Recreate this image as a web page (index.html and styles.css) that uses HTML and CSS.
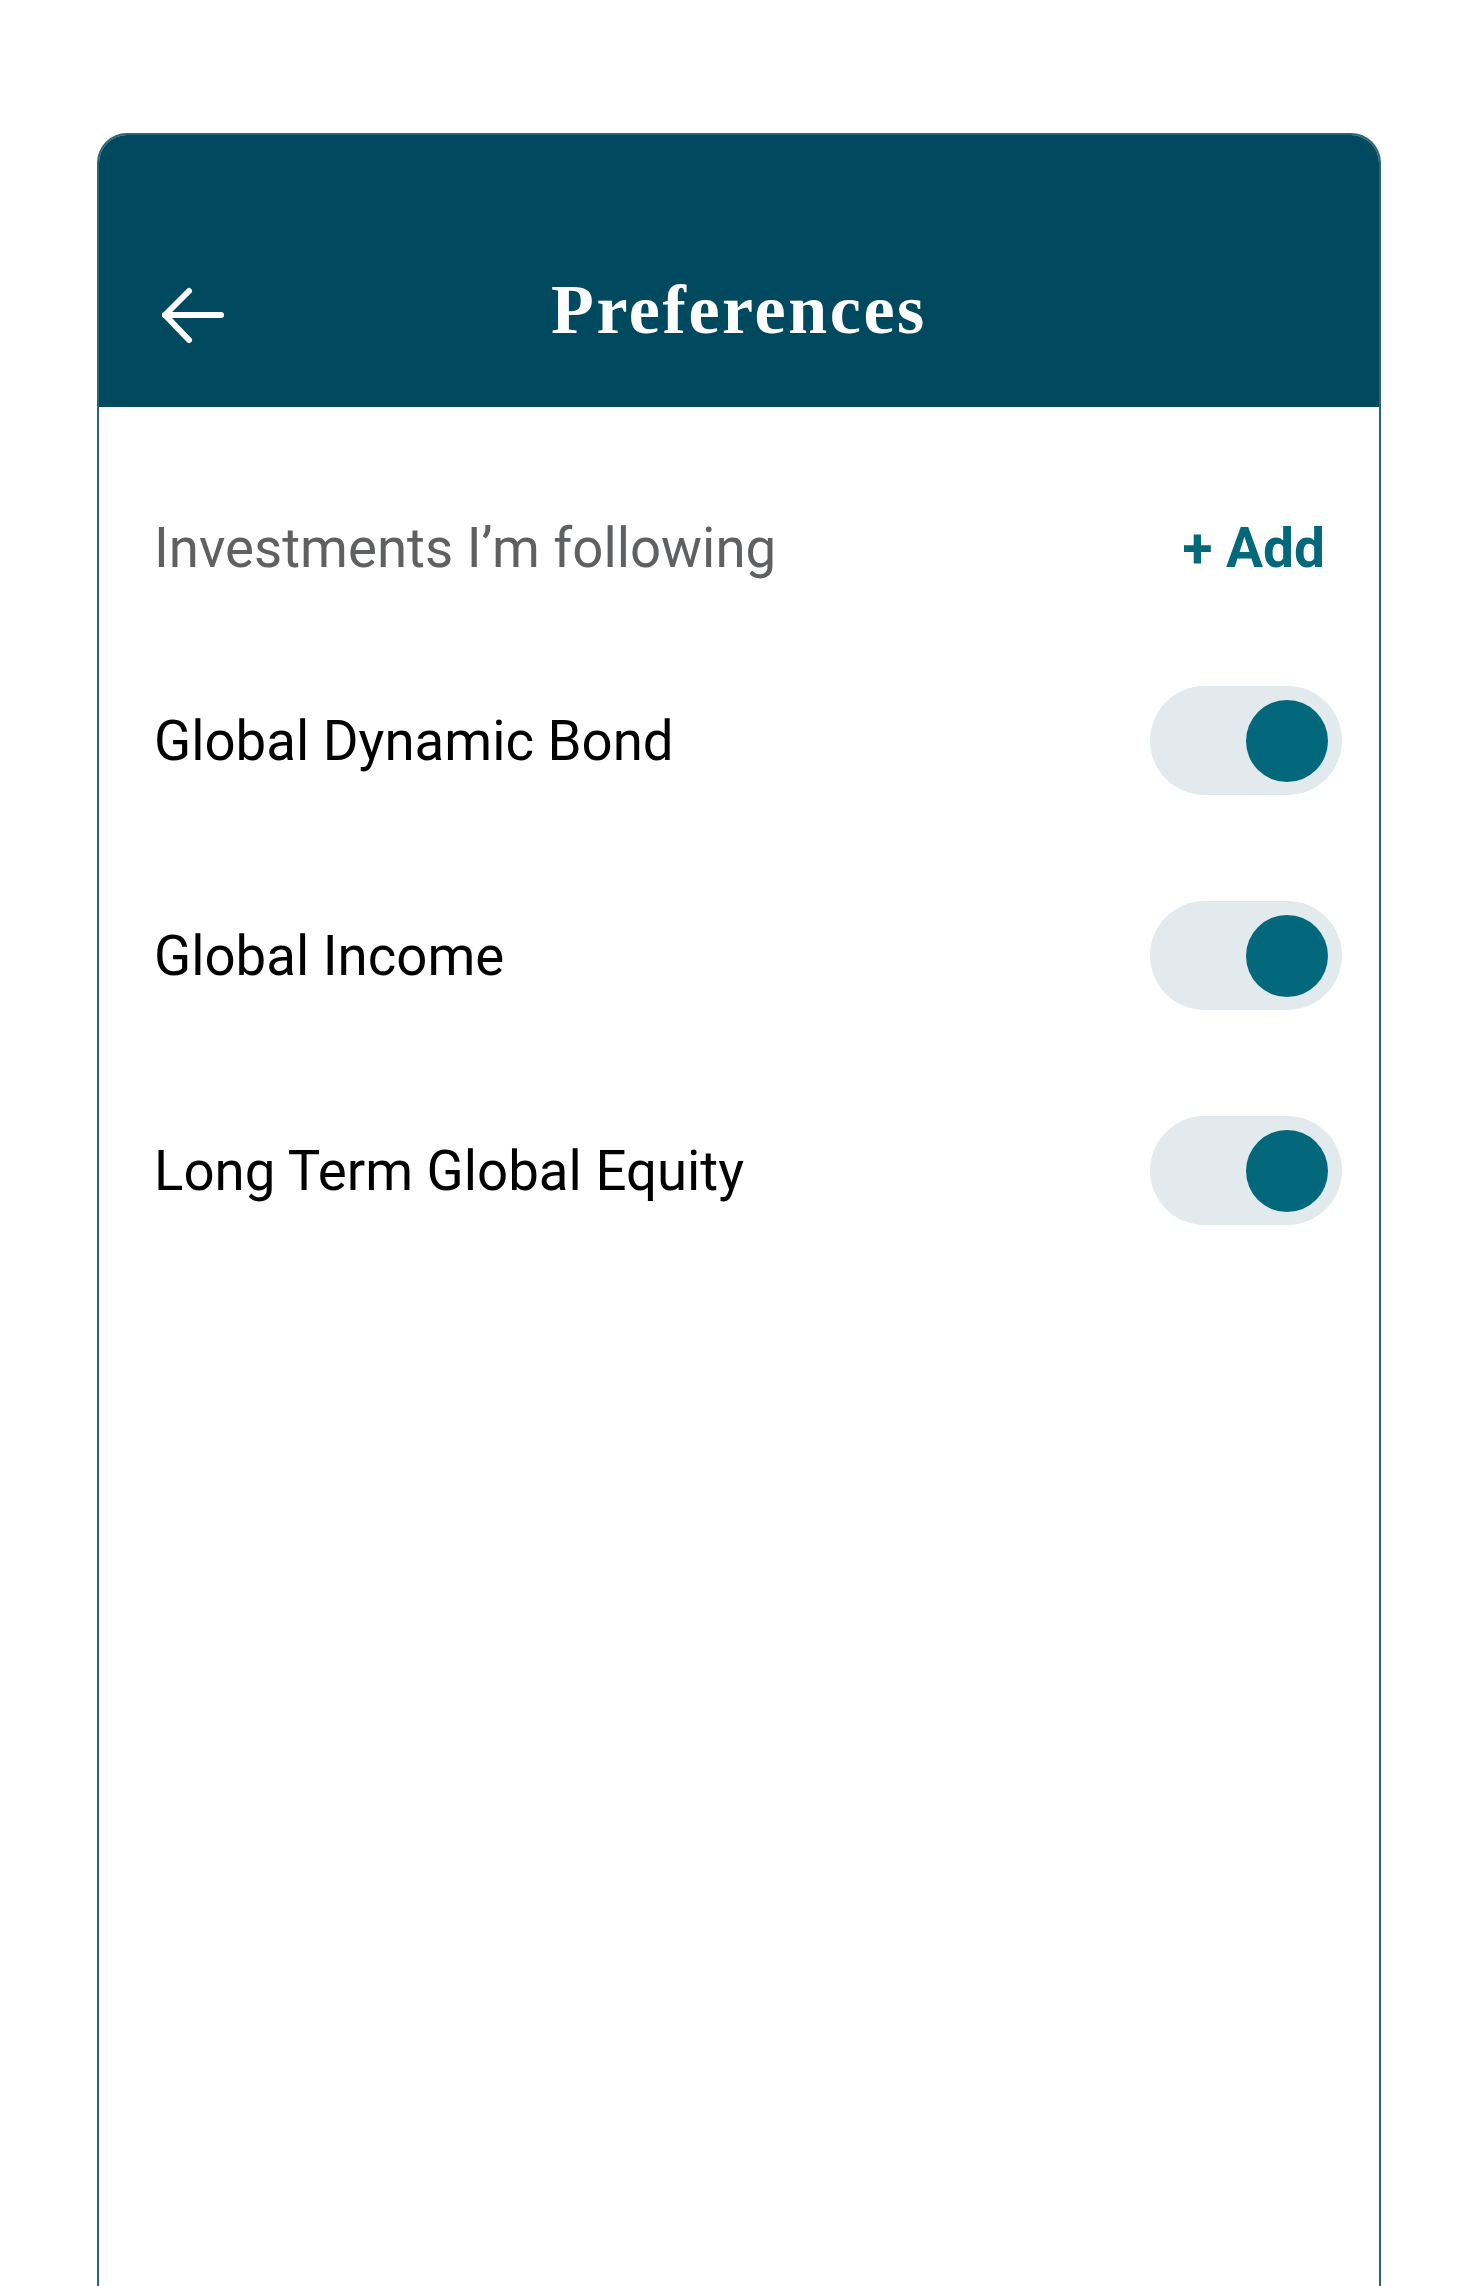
FILE: index.html
```html
<!DOCTYPE html>
<html lang="en">
<head>
<meta charset="utf-8">
<title>Preferences</title>
<link rel="stylesheet" href="styles.css">
</head>
<body>
<div class="page">
  <div class="card">
    <header class="appbar">
      <div class="appbar-row">
        <button class="back" aria-label="Back">
          <svg width="70" height="70" viewBox="0 0 70 70" fill="none" stroke="#ffffff" stroke-width="6" stroke-linecap="round" stroke-linejoin="round">
            <path d="M6 35 H62"/>
            <path d="M30 11 L6 35 L30 60"/>
          </svg>
        </button>
        <h1 class="title">Preferences</h1>
        <span class="spacer"></span>
      </div>
    </header>
    <main class="content">
      <div class="section-head">
        <span class="section-label">Investments I’m following</span>
        <a class="add-link" href="#">+ Add</a>
      </div>
      <ul class="list">
        <li class="row">
          <span class="row-label">Global Dynamic Bond</span>
          <span class="toggle on"><span class="knob"></span></span>
        </li>
        <li class="row">
          <span class="row-label">Global Income</span>
          <span class="toggle on"><span class="knob"></span></span>
        </li>
        <li class="row">
          <span class="row-label">Long Term Global Equity</span>
          <span class="toggle on"><span class="knob"></span></span>
        </li>
      </ul>
    </main>
  </div>
</div>
</body>
</html>
```
FILE: styles.css
```css
* { box-sizing: border-box; }
html, body {
  margin: 0;
  padding: 0;
  background: #ffffff;
  overflow: hidden;
}
body {
  font-family: Roboto, "Liberation Sans", Arial, sans-serif;
}
.page {
  padding: 133px 98px 0 97px;
  height: 2286px;
}
.card {
  height: 2153px;
  border: 2px solid #2c6477;
  border-bottom: 0;
  border-radius: 30px 30px 0 0;
  overflow: hidden;
  display: flex;
  flex-direction: column;
  background: #ffffff;
}
.appbar {
  background: #01495e;
  height: 272px;
  padding: 127px 0 49px;
  flex: none;
}
.appbar-row {
  height: 96px;
  display: grid;
  grid-template-columns: 1fr auto 1fr;
  align-items: center;
}
.back {
  justify-self: start;
  margin-left: 60px;
  margin-top: 10px;
  padding: 0;
  border: 0;
  background: none;
  width: 70px;
  height: 70px;
  display: flex;
}
.title {
  margin: 0;
  color: #ffffff;
  font-family: "Liberation Serif", "Times New Roman", serif;
  font-weight: 700;
  font-size: 70px;
  line-height: 96px;
  letter-spacing: 2.6px;
}
.content {
  padding: 86px 37px 0 55px;
}
.section-head {
  height: 109px;
  display: flex;
  align-items: center;
  justify-content: space-between;
  margin-bottom: 84px;
}
.section-label {
  font-size: 54.6px;
  color: #5f6062;
}
.add-link {
  font-size: 55px;
  font-weight: 700;
  color: #03687c;
  text-decoration: none;
  margin-right: 17px;
}
.list {
  list-style: none;
  margin: 0;
  padding: 0;
  display: flex;
  flex-direction: column;
  gap: 106px;
}
.row {
  height: 109px;
  display: flex;
  align-items: center;
  justify-content: space-between;
}
.row-label {
  font-size: 54.6px;
  color: #000000;
}
.toggle {
  width: 192px;
  height: 109px;
  border-radius: 55px;
  background: #e2eaed;
  display: flex;
  align-items: center;
  padding: 0 14px;
}
.toggle.on { justify-content: flex-end; }
.knob {
  width: 82px;
  height: 82px;
  border-radius: 50%;
  background: #03687c;
}
```
